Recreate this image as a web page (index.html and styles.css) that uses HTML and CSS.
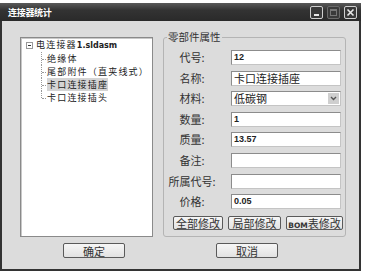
FILE: index.html
```html
<!DOCTYPE html>
<html lang="zh">
<head>
    <meta charset="UTF-8">
    <title>连接器统计</title>
    <link rel="stylesheet" href="styles.css">
</head>
<body>

    <div class="window">
        <div class="titlebar">
            <span class="title">连接器统计</span>
            <div class="controls">
                <span class="ctl"><span class="min-glyph"></span></span>
                <span class="ctl dim"><span class="max-glyph"></span></span>
                <span class="ctl">
                    <svg width="9" height="9" viewBox="0 0 9 9"><path d="M1.5 1.5 L7.5 7.5 M7.5 1.5 L1.5 7.5" stroke="#e8e8e8" stroke-width="1.6"/></svg>
                </span>
            </div>
        </div>

        <div class="client">
            <div class="main">
                <!-- assembly tree -->
                <div class="tree">
                    <div class="root"><span class="toggle"></span><span>电连接器<b>1.sldasm</b></span></div>
                    <ul class="children">
                        <li><span>绝缘体</span></li>
                        <li><span>尾部附件（直夹线式）</span></li>
                        <li><span class="selected">卡口连接插座</span></li>
                        <li><span>卡口连接插头</span></li>
                    </ul>
                </div>

                <!-- part properties -->
                <div class="group">
                    <span class="legend">零部件属性</span>
                    <div class="form">
                        <label>代号:</label><div class="field num">12</div>
                        <label>名称:</label><div class="field">卡口连接插座</div>
                        <label>材料:</label>
                        <div class="field combo">
                            <span>低碳钢</span>
                            <span class="arrow">
                                <svg width="7" height="5" viewBox="0 0 7 5"><path d="M1 1 L3.5 3.5 L6 1" fill="none" stroke="#555" stroke-width="1.4"/></svg>
                            </span>
                        </div>
                        <label>数量:</label><div class="field num">1</div>
                        <label>质量:</label><div class="field num">13.57</div>
                        <label>备注:</label><div class="field"></div>
                        <label>所属代号:</label><div class="field"></div>
                        <label>价格:</label><div class="field num">0.05</div>
                    </div>
                    <div class="actions">
                        <button class="btn w-all">全部修改</button>
                        <button class="btn w-part">局部修改</button>
                        <button class="btn w-bom"><b>BOM</b>表修改</button>
                    </div>
                </div>
            </div>

            <div class="footer">
                <button class="btn big">确定</button>
                <button class="btn big">取消</button>
            </div>
        </div>
    </div>

</body>
</html>
```

FILE: styles.css
```css
body {
    margin: 0;
    background-color: #fff;
    font-family: "Noto Sans CJK SC", "DejaVu Sans", sans-serif;
    font-size: 11px;
    color: #222;
}
.window {
    width: 361px;
    height: 268px;
    margin-top: 3px;
    box-sizing: border-box;
    border: 2px solid #333;
    border-top: none;
    background-color: #dcdcdc;
    display: flex;
    flex-direction: column;
}
.titlebar {
    height: 18px;
    margin: 0 -2px;
    padding: 0 4px 0 8px;
    background: linear-gradient(#5a5a5a, #333 40%, #2a2a2a);
    display: flex;
    align-items: center;
    justify-content: space-between;
}
.title {
    color: #fff;
    font-weight: bold;
    font-size: 9px;
    letter-spacing: -0.3px;
}
.controls {
    display: flex;
    gap: 4px;
}
.ctl {
    width: 11px;
    height: 11px;
    border: 1px solid #cfcfcf;
    border-radius: 2px;
    background-color: #3a3a3a;
    display: flex;
    align-items: center;
    justify-content: center;
}
.ctl.dim {
    border-color: #6a6a6a;
}
.min-glyph {
    width: 5px;
    height: 2px;
    background-color: #e8e8e8;
    margin-top: 5px;
}
.max-glyph {
    width: 5px;
    height: 4px;
    border: 1px solid #777;
    border-top-width: 2px;
}
.client {
    flex: 1;
    padding: 16px 0 0 18px;
}
.main {
    display: flex;
    gap: 10px;
    height: 200px;
}
.tree {
    width: 133px;
    box-sizing: border-box;
    background-color: #fff;
    border: 1px solid #8a8a8a;
    box-shadow: inset 1px 1px 0 #c8c8c8;
    font-size: 9px;
    line-height: 13px;
    letter-spacing: 1.2px;
    color: #222;
}
.root {
    display: flex;
    align-items: center;
    padding-left: 5px;
}
.root b {
    font-family: "DejaVu Sans", sans-serif;
    font-size: 8px;
    letter-spacing: 0;
}
.toggle {
    width: 5px;
    height: 5px;
    border: 1px solid #999;
    margin-right: 3px;
    position: relative;
}
.toggle::after {
    content: "";
    position: absolute;
    left: 1px;
    top: 2px;
    width: 3px;
    height: 1px;
    background-color: #333;
}
.children {
    list-style: none;
    margin: 0 0 0 20px;
    padding: 0;
}
.children li {
    position: relative;
    padding-left: 6px;
}
.children li::before {
    content: "";
    position: absolute;
    left: 0;
    top: 0;
    height: 100%;
    border-left: 1px dotted #999;
}
.children li:last-child::before {
    height: 50%;
}
.children li::after {
    content: "";
    position: absolute;
    left: 1px;
    top: 50%;
    width: 4px;
    border-top: 1px dotted #999;
}
.selected {
    background-color: #d4d4d4;
}
.group {
    width: 183px;
    box-sizing: border-box;
    border: 1px solid #b4b4b4;
    border-radius: 3px;
    padding-top: 12px;
    position: relative;
}
.legend {
    position: absolute;
    left: 3px;
    top: -8px;
    padding: 0 1px;
    background-color: #dcdcdc;
    font-size: 10.5px;
    line-height: 14px;
    color: #333;
}
.form {
    display: grid;
    grid-template-columns: 56px 110px;
    grid-auto-rows: 15px;
    column-gap: 11px;
    row-gap: 5.6px;
}
.form label {
    text-align: center;
    line-height: 15px;
    color: #333;
}
.field {
    box-sizing: border-box;
    background-color: #fff;
    border: 1px solid #8c8c8c;
    border-right-color: #c4c4c4;
    border-bottom-color: #c4c4c4;
    padding-left: 2px;
    line-height: 13px;
    display: flex;
    align-items: center;
}
.field.num {
    font-family: "Liberation Sans", sans-serif;
    font-weight: bold;
    font-size: 9px;
}
.combo {
    justify-content: space-between;
}
.arrow {
    width: 11px;
    height: 11px;
    margin-right: 1px;
    background-color: #cfcfcf;
    display: flex;
    align-items: center;
    justify-content: center;
}
.actions {
    display: flex;
    gap: 5px;
    margin: 7px 0 0 9px;
}
.btn {
    box-sizing: border-box;
    height: 14px;
    padding: 0;
    font-family: "Noto Sans CJK SC", sans-serif;
    font-size: 11px;
    line-height: 12px;
    color: #333;
    background: linear-gradient(#f6f6f6, #e2e2e2);
    border: 1px solid #5a5a5a;
    border-radius: 2px;
}
.btn b {
    font-family: "DejaVu Sans", sans-serif;
    font-size: 7.5px;
}
.w-all {
    width: 50px;
}
.w-part {
    width: 53px;
}
.w-bom {
    width: 57px;
}
.footer {
    display: flex;
    gap: 91px;
    margin: 6px 0 0 43px;
}
.btn.big {
    width: 62px;
    height: 15px;
}
```
